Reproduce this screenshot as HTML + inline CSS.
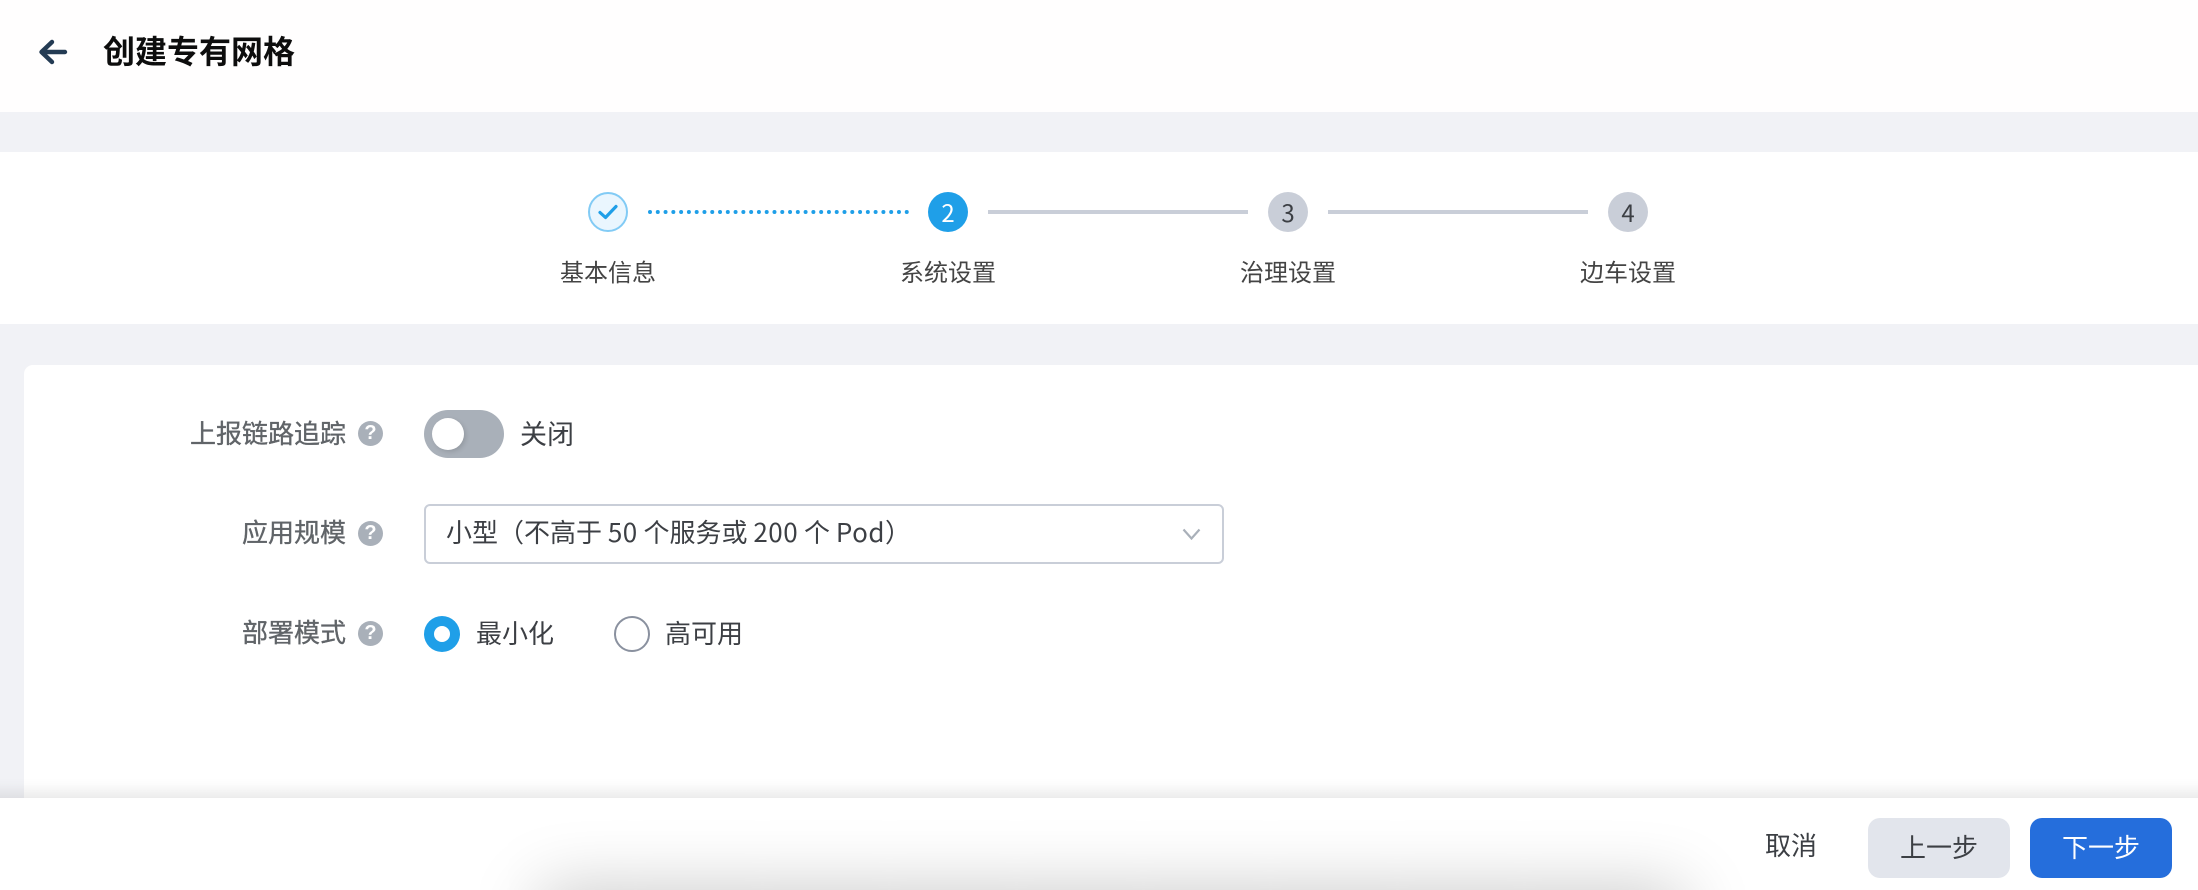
<!DOCTYPE html>
<html lang="zh"><head><meta charset="utf-8"><title>创建专有网格</title>
<style>
html,body{margin:0;padding:0;width:2198px;height:890px;overflow:hidden;background:#f1f2f6;}
body{position:relative;font-family:"Liberation Sans","Noto Sans CJK SC",sans-serif;}
div,span{position:absolute;box-sizing:border-box;white-space:nowrap;}
.cjk{font-family:"Noto Sans CJK SC",sans-serif;}
.lab{font-family:"Noto Sans CJK SC",sans-serif;font-size:26px;line-height:36px;color:#606468;-webkit-text-stroke:.35px #606468;}
.txt{font-family:"Noto Sans CJK SC",sans-serif;font-size:26px;line-height:36px;color:#3c3f44;}
.txt span{position:static;letter-spacing:.5px;}
.st{font-family:"Noto Sans CJK SC",sans-serif;font-size:24px;line-height:30px;color:#444;top:256px;}
.c{top:192px;width:40px;height:40px;border-radius:50%;background:#c9ced8;color:#3c3f44;font-family:"Noto Sans CJK SC",sans-serif;font-size:24px;line-height:39px;text-align:center;}
.ln{top:210px;height:4px;background:#c9ced8;}
.q{left:358px;width:25px;height:25px;border-radius:50%;background:#a9b0b9;color:#fff;font:bold 20px/25px "Liberation Sans",sans-serif;text-align:center;}
.btn{top:818px;width:142px;height:60px;border-radius:12px;font-family:"Noto Sans CJK SC",sans-serif;font-size:26px;line-height:58px;text-align:center;}
</style></head><body>
<div style="left:0;top:0;width:2198px;height:112px;background:#fffefe"></div>
<svg style="position:absolute;left:0;top:0" width="100" height="100"><path d="M65 52H42M52 42L41.5 52L52 62" fill="none" stroke="#243b53" stroke-width="4.4" stroke-linecap="round" stroke-linejoin="round"/></svg>
<div class="cjk" style="left:103px;top:27px;font-size:32px;line-height:46px;font-weight:700;color:#0d0d0d">创建专有网格</div>

<div style="left:0;top:152px;width:2198px;height:172px;background:#fff"></div>
<div style="left:588px;top:192px;width:40px;height:40px;border-radius:50%;background:#eaf6fe;border:2px solid #82cbf5"></div>
<svg style="position:absolute;left:0;top:0" width="1000" height="300"><path d="M600 212.5L605.5 217.5L616 206.5" fill="none" stroke="#1f9fe8" stroke-width="3.2" stroke-linecap="round" stroke-linejoin="round"/><line x1="650" y1="212" x2="907.5" y2="212" stroke="#1f9fe8" stroke-width="4" stroke-linecap="round" stroke-dasharray="0 7.78"/></svg>
<div class="c" style="left:928px;background:#1f9fe8;color:#fff">2</div>
<div class="ln" style="left:988px;width:260px"></div>
<div class="c" style="left:1268px">3</div>
<div class="ln" style="left:1328px;width:260px"></div>
<div class="c" style="left:1608px">4</div>
<div class="st" style="left:560px">基本信息</div>
<div class="st" style="left:900px">系统设置</div>
<div class="st" style="left:1240px">治理设置</div>
<div class="st" style="left:1580px">边车设置</div>

<div style="left:24px;top:365px;width:2174px;height:460px;background:#fff;border-top-left-radius:9px"></div>

<div class="lab" style="left:190px;top:415px">上报链路追踪</div>
<div class="q" style="top:421px">?</div>
<div style="left:424px;top:410px;width:80px;height:48px;border-radius:24px;background:#a9b0b9"></div>
<div style="left:432px;top:418px;width:32px;height:32px;border-radius:50%;background:#fff;box-shadow:2px 2px 5px rgba(0,0,0,.12)"></div>
<div class="txt" style="left:520px;top:415px;font-size:27px">关闭</div>

<div class="lab" style="left:242px;top:514px">应用规模</div>
<div class="q" style="top:521px">?</div>
<div style="left:424px;top:504px;width:800px;height:60px;border:2px solid #c9ced8;border-radius:6px;background:#fff"></div>
<div class="txt" style="left:446px;top:514px">小型（不高于 <span>50</span> 个服务或 <span>200</span> 个 <span>Pod</span>）</div>
<svg style="position:absolute;left:1180px;top:525px" width="24" height="18"><path d="M3.5 4.5L11.5 13.5L19.5 4.5" fill="none" stroke="#a9b0b9" stroke-width="2.2"/></svg>

<div class="lab" style="left:242px;top:614px">部署模式</div>
<div class="q" style="top:621px">?</div>
<div style="left:424px;top:616px;width:36px;height:36px;border-radius:50%;background:#1f9fe8"></div>
<div style="left:434px;top:626px;width:16px;height:16px;border-radius:50%;background:#fff"></div>
<div class="txt" style="left:476px;top:615px">最小化</div>
<div style="left:614px;top:616px;width:36px;height:36px;border-radius:50%;background:#fff;border:2px solid #8a919f"></div>
<div class="txt" style="left:665px;top:615px">高可用</div>

<div style="left:0;top:778px;width:2198px;height:20px;background:linear-gradient(to bottom,rgba(0,0,0,0),rgba(0,0,0,.01) 30%,rgba(0,0,0,.075))"></div>
<div style="left:0;top:798px;width:2198px;height:92px;background:#fff;overflow:hidden">
  <div style="left:600px;top:92px;width:1024px;height:1px;box-shadow:0 59px 68px 60px #c8c8c8"></div>
</div>
<div class="txt" style="left:1765px;top:827px">取消</div>
<div class="btn" style="left:1868px;background:#e2e5ec;color:#3c3f44">上一步</div>
<div class="btn" style="left:2030px;background:#256edc;color:#fff">下一步</div>
</body></html>
